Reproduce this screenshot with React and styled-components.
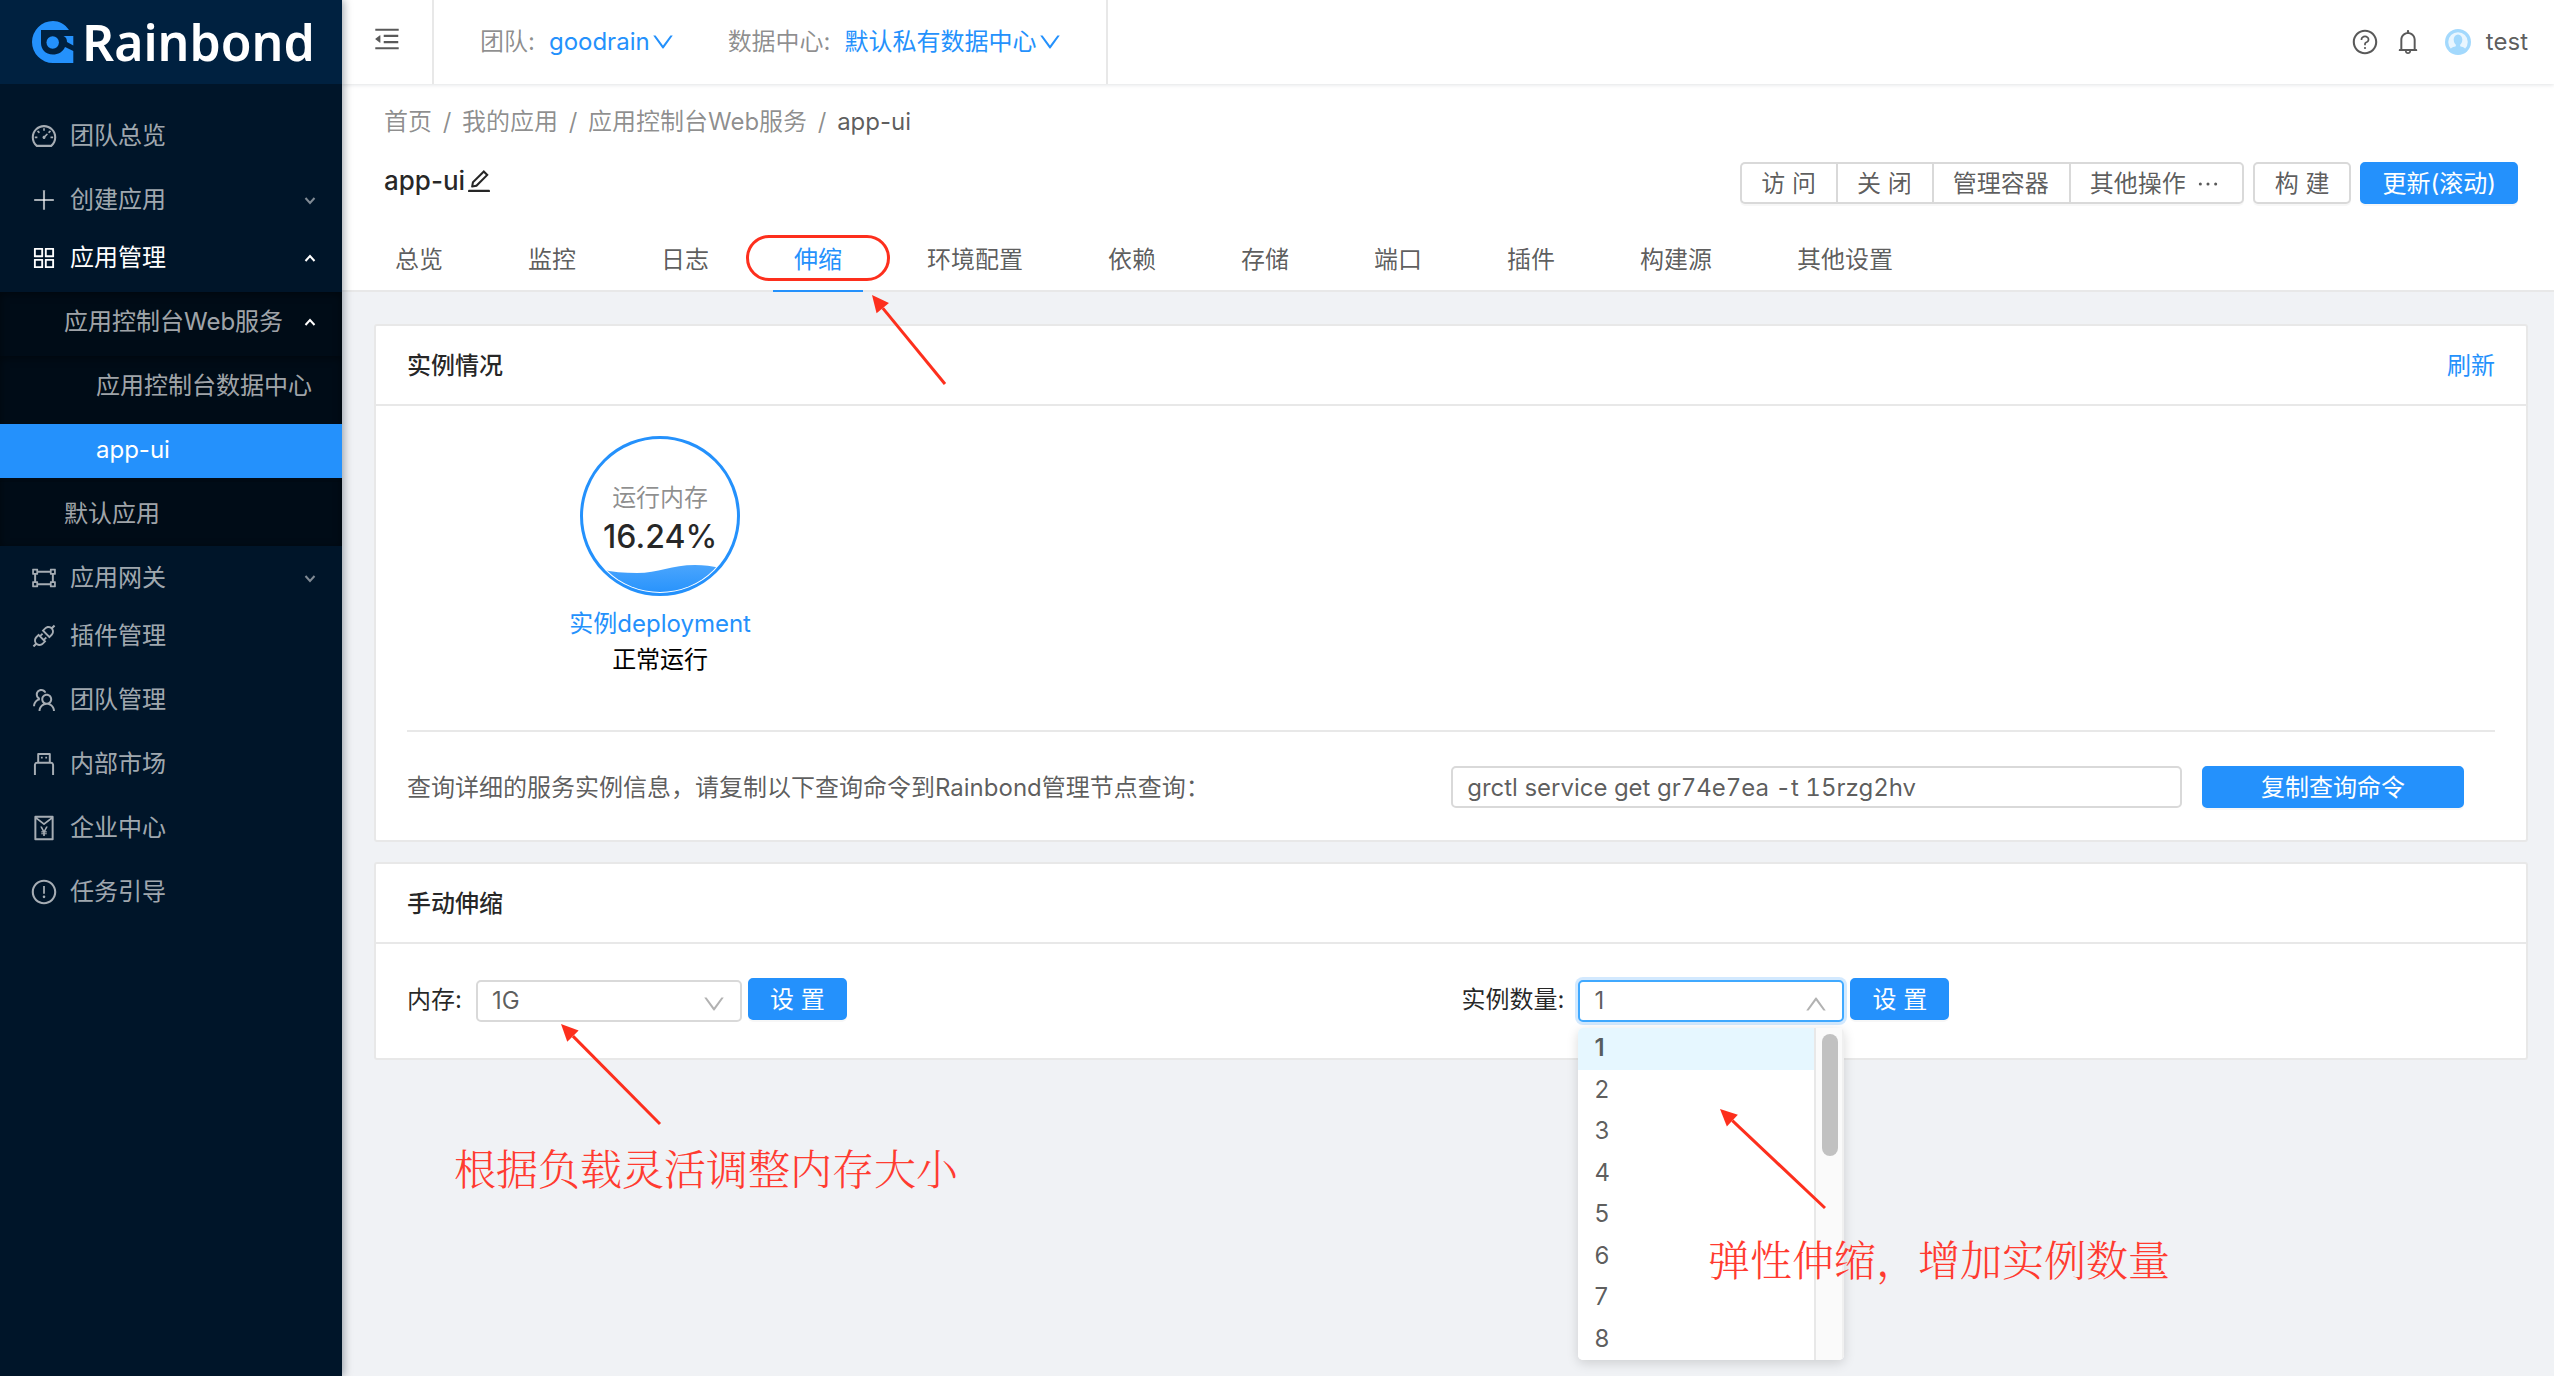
import styled, { createGlobalStyle } from 'styled-components';
import {
  AiOutlineApi, AiOutlineAppstore, AiOutlineBell, AiOutlineDashboard, AiOutlineDown, AiOutlineEdit,
  AiOutlineEllipsis, AiOutlineExclamationCircle, AiOutlineGateway, AiOutlineMenuFold, AiOutlinePlus,
  AiOutlineQuestionCircle, AiOutlineRedEnvelope, AiOutlineTeam, AiOutlineUp, AiOutlineUsb,
} from 'react-icons/ai';

const tabs = ['总览', '监控', '日志', '伸缩', '环境配置', '依赖', '存储', '端口', '插件', '构建源', '其他设置'];
const counts = ['1', '2', '3', '4', '5', '6', '7', '8'];

function Logo() {
  return (
    <Brand>
      <svg width="42" height="42" viewBox="0 0 42 42" aria-hidden="true">
        <path fill="#2491fc" d="M37 9C33 3 27 0 21 0A21 21 0 0 0 21 42H41.3V30L33 26C31 31 26 33.5 21 33.5C13 33.5 9 28 9 22V9Z" />
        <circle cx="20.7" cy="21.5" r="6.2" fill="#2491fc" />
        <path fill="#2491fc" d="M31.5 15H41.3V24.5L35 21C35 18 34 16 31.5 15Z" />
      </svg>
      Rainbond
    </Brand>
  );
}

function Sidebar() {
  return (
    <Sider>
      <Logo />
      <Menu>
        <MenuItem href="#"><AiOutlineDashboard />团队总览</MenuItem>
        <MenuTitle><AiOutlinePlus />创建应用<Caret /></MenuTitle>
        <MenuTitle $open><AiOutlineAppstore />应用管理<Caret $open /></MenuTitle>
        <SubMenu>
          <MenuTitle $indent={64}>应用控制台Web服务<Caret $open /></MenuTitle>
          <SubMenu>
            <MenuItem href="#" $indent={96}>应用控制台数据中心</MenuItem>
            <MenuItem href="#" $indent={96} $active>app-ui</MenuItem>
          </SubMenu>
          <MenuItem href="#" $indent={64}>默认应用</MenuItem>
        </SubMenu>
        <MenuTitle><AiOutlineGateway />应用网关<Caret /></MenuTitle>
        <MenuItem href="#"><AiOutlineApi />插件管理</MenuItem>
        <MenuItem href="#"><AiOutlineTeam />团队管理</MenuItem>
        <MenuItem href="#"><AiOutlineUsb />内部市场</MenuItem>
        <MenuItem href="#"><AiOutlineRedEnvelope />企业中心</MenuItem>
        <MenuItem href="#"><AiOutlineExclamationCircle />任务引导</MenuItem>
      </Menu>
    </Sider>
  );
}

function Caret({ $open }) {
  return (
    <CaretIcon viewBox="0 0 12 12" $open={$open} aria-hidden="true">
      <path d={$open ? 'M1.5 9L6 4l4.500 5' : 'M1.500 4L6 9l4.500-5'} />
    </CaretIcon>
  );
}

function Topbar() {
  return (
    <Header>
      <FoldButton aria-label="收起菜单"><AiOutlineMenuFold /></FoldButton>
      <Switchers>
        <Switcher>团队:<BlueLink href="#">goodrain<AiOutlineDown /></BlueLink></Switcher>
        <Switcher>数据中心:<BlueLink href="#">默认私有数据中心<AiOutlineDown /></BlueLink></Switcher>
      </Switchers>
      <UserArea>
        <AiOutlineQuestionCircle />
        <AiOutlineBell />
        <Avatar viewBox="0 0 24 24" aria-hidden="true">
          <circle cx="12" cy="12" r="12" fill="#a3d9fd" />
          <circle cx="12" cy="12" r="9" fill="#e9f6ff" />
          <ellipse cx="12" cy="10" rx="4" ry="5" fill="#a3d9fd" />
          <path d="M10 13h4v3c4 1 5 2 5 4a12 12 0 0 1-14 0c0-2 1-3 5-4Z" fill="#a3d9fd" />
        </Avatar>
        test
      </UserArea>
    </Header>
  );
}

function PageHead() {
  return (
    <Head>
      <Breadcrumb>
        <a href="#">首页</a><i>/</i>
        <a href="#">我的应用</a><i>/</i>
        <a href="#">应用控制台Web服务</a><i>/</i>
        <b>app-ui</b>
      </Breadcrumb>
      <TitleRow>
        <Title>app-ui<AiOutlineEdit /></Title>
        <Actions>
          <ButtonGroup>
            <Button>访 问</Button>
            <Button>关 闭</Button>
            <Button>管理容器</Button>
            <Button>其他操作<AiOutlineEllipsis /></Button>
          </ButtonGroup>
          <Button>构 建</Button>
          <Button $primary>更新(滚动)</Button>
        </Actions>
      </TitleRow>
      <Tabs>
        {tabs.map((tab) => (
          <Tab key={tab} href="#" $active={tab === '伸缩'}>{tab}</Tab>
        ))}
      </Tabs>
    </Head>
  );
}

function MemoryBall() {
  return (
    <Ball>
      <svg width="160" height="160" viewBox="0 0 160 160" aria-hidden="true">
        <defs>
          <linearGradient id="water" x1="0" y1="0" x2="0" y2="1">
            <stop offset="0" stopColor="#4aa5fd" />
            <stop offset="1" stopColor="#2491fc" />
          </linearGradient>
          <clipPath id="inner"><circle cx="80" cy="80" r="76" /></clipPath>
        </defs>
        <path clipPath="url(#inner)" fill="url(#water)" d="M20 133C32 136 44 137 57 137C78 137 92 129 115 129C124 129 132 130 140 132V160H20Z" />
        <circle cx="80" cy="80" r="78.500" fill="none" stroke="#2491fc" strokeWidth="3" />
      </svg>
      <BallText>
        <span>运行内存</span>
        <strong>16.24%</strong>
      </BallText>
    </Ball>
  );
}

function InstanceCard() {
  return (
    <Card>
      <CardHead>
        <h2>实例情况</h2>
        <BlueLink href="#">刷新</BlueLink>
      </CardHead>
      <CardBody>
        <Instances>
          <Instance>
            <MemoryBall />
            <BlueLink href="#">实例deployment</BlueLink>
            <span>正常运行</span>
          </Instance>
        </Instances>
        <CommandRow>
          <label htmlFor="command">查询详细的服务实例信息，请复制以下查询命令到Rainbond管理节点查询：</label>
          <TextInput id="command" readOnly value="grctl service get gr74e7ea -t 15rzg2hv" />
          <Button $primary>复制查询命令</Button>
        </CommandRow>
      </CardBody>
    </Card>
  );
}

function ScaleCard() {
  return (
    <Card>
      <CardHead>
        <h2>手动伸缩</h2>
      </CardHead>
      <ScaleForm>
        <Field>
          <label htmlFor="memory">内存:</label>
          <SelectBox>
            <select id="memory" defaultValue="1G">
              <option>1G</option>
              <option>2G</option>
            </select>
            <AiOutlineDown />
          </SelectBox>
          <Button $primary>设 置</Button>
        </Field>
        <Field>
          <label htmlFor="count">实例数量:</label>
          <SelectBox $open>
            <select id="count" defaultValue="1">
              {counts.map((n) => <option key={n}>{n}</option>)}
            </select>
            <AiOutlineUp />
            <Dropdown>
              <ul>
                {counts.map((n) => <Option key={n} $active={n === '1'}>{n}</Option>)}
              </ul>
              <Track><span /></Track>
            </Dropdown>
          </SelectBox>
          <Button $primary>设 置</Button>
        </Field>
      </ScaleForm>
    </Card>
  );
}

// red arrow pointing to its top left corner
function Arrow({ x, y, width, height }) {
  const len = Math.hypot(width, height);
  const ux = width / len;
  const uy = height / len;
  const bx = ux * 17;
  const by = uy * 17;
  return (
    <ArrowSvg $x={x} $y={y} width={width + 4} height={height + 4} aria-hidden="true">
      <line x1={bx} y1={by} x2={width} y2={height} stroke="#fd2f1d" strokeWidth="3" />
      <polygon points={`0,0 ${bx - uy * 8},${by + ux * 8} ${bx + uy * 8},${by - ux * 8}`} fill="#fd2f1d" />
    </ArrowSvg>
  );
}

export default function App() {
  return (
    <Layout>
      <GlobalStyle />
      <Sidebar />
      <Main>
        <Topbar />
        <PageHead />
        <Content>
          <InstanceCard />
          <ScaleCard />
        </Content>
        <TabMark />
        <Arrow x={530} y={295} width={73} height={89} />
        <Arrow x={219} y={1024} width={99} height={100} />
        <Arrow x={1378} y={1109} width={105} height={99} />
        <Note $x={112} $y={1142}>根据负载灵活调整内存大小</Note>
        <Note $x={1366} $y={1233}>弹性伸缩，增加实例数量</Note>
      </Main>
    </Layout>
  );
}

const GlobalStyle = createGlobalStyle`
  * {
    box-sizing: border-box;
  }

  body {
    margin: 0;
    background: #f0f2f5;
    color: rgba(0, 0, 0, 0.65);
    font-family: Inter, 'Noto Sans CJK SC', sans-serif;
    font-size: 24px;
    line-height: 36px;
  }

  a {
    color: inherit;
    text-decoration: none;
  }

  button, input, select {
    font: inherit;
    color: inherit;
  }

  h1, h2, ul {
    margin: 0;
    padding: 0;
    list-style: none;
  }
`

const Layout = styled.div`
  display: flex;
  min-height: 100vh;
`

const Sider = styled.aside`
  position: relative;
  z-index: 2;
  flex: 0 0 342px;
  min-width: 0;
  background: #001529;
  box-shadow: 2px 0 8px rgba(0, 21, 41, 0.35);
`

const Brand = styled.div`
  display: flex;
  align-items: center;
  gap: 8px;
  height: 84px;
  padding-left: 32px;
  background: #002140;
  color: white;
  font-family: 'Noto Sans', sans-serif;
  font-size: 50px;
  font-weight: 600;
`

const Menu = styled.nav`
  padding: 26px 0;
`

const MenuItem = styled.a`
  display: flex;
  align-items: center;
  gap: 12px;
  height: 54px;
  padding: 0 0 2px ${({ $indent }) => $indent || 30}px;
  background: ${({ $active }) => ($active ? '#2491fc' : 'transparent')};
  color: ${({ $active }) => ($active ? 'white' : 'rgba(255, 255, 255, 0.65)')};
  white-space: nowrap;

  & + & {
    margin-top: 10px;
  }

  > svg {
    font-size: 28px;
  }
`

const MenuTitle = styled.button`
  display: flex;
  align-items: center;
  gap: 12px;
  width: 100%;
  height: 54px;
  padding: 0 26px 2px ${({ $indent }) => $indent || 30}px;
  border: 0;
  background: transparent;
  color: ${({ $open }) => ($open ? 'white' : 'rgba(255, 255, 255, 0.65)')};
  white-space: nowrap;

  ${MenuItem} + & {
    margin-top: 10px;
  }

  & + &, & + ${MenuItem} {
    margin-top: 4px;
  }

  > svg {
    font-size: 28px;
  }
`

const SubMenu = styled.div`
  margin: 6px 0;
  padding: 4px 0;
  background: #000c17;
  box-shadow: inset 0 2px 8px rgba(0, 0, 0, 0.45);
`

const CaretIcon = styled.svg`
  width: 12px;
  height: 12px;
  margin-left: auto;
  fill: none;
  stroke: ${({ $open }) => ($open ? 'white' : 'rgba(255, 255, 255, 0.5)')};
  stroke-width: 2;
`

const Main = styled.main`
  position: relative;
  flex: 1;
  min-width: 0;
`

const Header = styled.header`
  position: relative;
  z-index: 1;
  display: flex;
  height: 84px;
  background: white;
  box-shadow: 0 1px 4px rgba(0, 21, 41, 0.12);
`

const FoldButton = styled.button`
  display: flex;
  align-items: center;
  width: 92px;
  padding: 0 0 6px 30px;
  border: 0;
  border-right: 2px solid #e8e8e8;
  background: transparent;
  font-size: 30px;
`

const Switchers = styled.div`
  display: flex;
  align-items: center;
  gap: 52px;
  padding: 0 43px 0 46px;
  border-right: 2px solid #e8e8e8;
`

const BlueLink = styled.a`
  color: #2491fc;
`

const Switcher = styled.span`
  display: flex;
  align-items: center;
  gap: 14px;
  color: rgba(0, 0, 0, 0.45);

  ${BlueLink} {
    display: flex;
    align-items: center;
  }

  svg {
    font-size: 26px;
  }
`

const UserArea = styled.div`
  display: flex;
  align-items: center;
  gap: 15px;
  margin-left: auto;
  padding-right: 26px;

  svg {
    font-size: 28px;
  }
`

const Avatar = styled.svg`
  width: 26px;
  height: 26px;
  margin-left: 8px;
`

const Head = styled.section`
  background: white;
  border-bottom: 2px solid #e8e8e8;
`

const Breadcrumb = styled.nav`
  display: flex;
  padding: 20px 42px 0;
  color: rgba(0, 0, 0, 0.45);

  i {
    width: 30px;
    font-style: normal;
    text-align: center;
  }

  b {
    color: rgba(0, 0, 0, 0.65);
    font-weight: 400;
  }
`

const TitleRow = styled.div`
  display: flex;
  justify-content: space-between;
  padding: 22px 36px 0 42px;
`

const Title = styled.h1`
  display: flex;
  align-items: center;
  height: 38px;
  color: rgba(0, 0, 0, 0.85);
  font-size: 26px;
  font-weight: 500;

  svg {
    font-size: 28px;
  }
`

const Actions = styled.div`
  display: flex;
  gap: 9px;
`

const Button = styled.button`
  display: flex;
  align-items: center;
  justify-content: center;
  gap: 8px;
  height: 42px;
  padding: 2px 20px 0;
  border: 2px solid ${({ $primary }) => ($primary ? '#2491fc' : '#d9d9d9')};
  border-radius: 5px;
  background: ${({ $primary }) => ($primary ? '#2491fc' : 'white')};
  color: ${({ $primary }) => ($primary ? 'white' : 'rgba(0, 0, 0, 0.65)')};
  box-shadow: 0 2px 0 rgba(0, 0, 0, 0.03);
  white-space: nowrap;

  svg {
    font-size: 28px;
  }
`

const ButtonGroup = styled.div`
  display: flex;

  ${Button} {
    padding: 2px 20px 0 19px;
  }

  ${Button}:not(:first-child) {
    border-top-left-radius: 0;
    border-bottom-left-radius: 0;
  }

  ${Button}:not(:last-child) {
    border-right: 0;
    border-top-right-radius: 0;
    border-bottom-right-radius: 0;
  }
`

const Tabs = styled.nav`
  display: flex;
  gap: 43px;
  height: 86px;
  padding: 0 32px;
`

const Tab = styled.a`
  height: 88px;
  padding: 38px 21px 0;
  border-bottom: 2px solid ${({ $active }) => ($active ? '#2491fc' : 'transparent')};
  color: ${({ $active }) => ($active ? '#2491fc' : 'inherit')};
`

const Content = styled.div`
  display: flex;
  flex-direction: column;
  gap: 20px;
  padding: 32px 26px 32px 32px;
`

const Card = styled.section`
  border: 2px solid #e8e8e8;
  border-radius: 3px;
  background: white;
`

const CardHead = styled.div`
  display: flex;
  align-items: center;
  justify-content: space-between;
  height: 80px;
  padding: 2px 31px 0;
  border-bottom: 2px solid #e8e8e8;

  h2 {
    color: rgba(0, 0, 0, 0.85);
    font-size: 24px;
    font-weight: 500;
  }
`

const CardBody = styled.div`
  padding: 30px 31px 32px;
`

const Instances = styled.div`
  display: grid;
  grid-template-columns: repeat(4, 1fr);
  gap: 21px;
  padding-bottom: 52px;
  border-bottom: 2px solid #e8e8e8;
`

const Instance = styled.div`
  display: flex;
  flex-direction: column;
  align-items: center;

  > a {
    margin-top: 10px;
  }

  > span {
    color: black;
  }
`

const Ball = styled.div`
  position: relative;
  width: 160px;
  height: 160px;
`

const BallText = styled.div`
  position: absolute;
  inset: 44px 0 auto;
  display: flex;
  flex-direction: column;
  align-items: center;
  color: rgba(0, 0, 0, 0.45);

  strong {
    color: rgba(0, 0, 0, 0.85);
    font-size: 32px;
    font-weight: 500;
    line-height: 42px;
  }
`

const CommandRow = styled.div`
  display: grid;
  grid-template-columns: 1fr 36.5% 262px;
  align-items: center;
  padding: 34px 31px 0 0;

  label {
    padding-top: 2px;
  }
`

const TextInput = styled.input`
  width: calc(100% - 20px);
  height: 42px;
  padding: 0 14px;
  border: 2px solid #d9d9d9;
  border-radius: 5px;
  font-variant-numeric: tabular-nums;
`

const ScaleForm = styled.div`
  display: grid;
  grid-template-columns: 1fr 1fr;
  gap: 21px;
  padding: 34px 31px 36px;
`

const Field = styled.div`
  display: flex;
  align-items: flex-start;
  color: rgba(0, 0, 0, 0.85);

  label {
    padding: 4px 14px 0 0;
  }
`

const SelectBox = styled.div`
  position: relative;
  width: 266px;
  margin: 2px 6px 0 0;
  color: rgba(0, 0, 0, 0.65);

  select {
    display: block;
    width: 100%;
    height: 42px;
    padding: 0 14px;
    border: 2px solid ${({ $open }) => ($open ? '#40a9ff' : '#d9d9d9')};
    border-radius: 5px;
    outline: 0;
    background: white;
    box-shadow: ${({ $open }) => ($open ? '0 0 0 3px rgba(36, 145, 252, 0.2)' : 'none')};
    appearance: none;
  }

  > svg {
    position: absolute;
    top: 11px;
    right: 15px;
    color: rgba(0, 0, 0, 0.3);
    font-size: 26px;
  }
`

const Dropdown = styled.div`
  position: absolute;
  top: 48px;
  left: 0;
  display: flex;
  width: 100%;
  height: 332px;
  border-radius: 5px;
  overflow: hidden;
  background: white;
  box-shadow: 0 3px 12px rgba(0, 0, 0, 0.15);

  ul {
    display: grid;
    grid-auto-rows: 1fr;
    flex: 1;
  }
`

const Option = styled.li`
  display: flex;
  align-items: center;
  padding: 0 0 1px 16px;
  background: ${({ $active }) => ($active ? '#e6f7ff' : 'white')};
  font-weight: ${({ $active }) => ($active ? 600 : 400)};
`

const Track = styled.div`
  width: 30px;
  padding: 6px;
  border-left: 2px solid #e8e8e8;
  border-right: 2px solid #f0f0f0;
  background: #fafafa;

  span {
    display: block;
    width: 16px;
    height: 122px;
    border-radius: 8px;
    background: #c1c1c1;
  }
`

const TabMark = styled.div`
  position: absolute;
  top: 235px;
  left: 404px;
  width: 144px;
  height: 46px;
  border: 3px solid #fd2f1d;
  border-radius: 23px;
  pointer-events: none;
`

const ArrowSvg = styled.svg`
  position: absolute;
  left: ${({ $x }) => $x}px;
  top: ${({ $y }) => $y}px;
  overflow: visible;
  pointer-events: none;
`

const Note = styled.p`
  position: absolute;
  left: ${({ $x }) => $x}px;
  top: ${({ $y }) => $y}px;
  margin: 0;
  color: #ff3b30;
  font-family: 'Noto Serif CJK SC', 'Noto Sans CJK SC', serif;
  font-size: 42px;
  font-weight: 300;
  line-height: 50px;
  white-space: nowrap;
`
